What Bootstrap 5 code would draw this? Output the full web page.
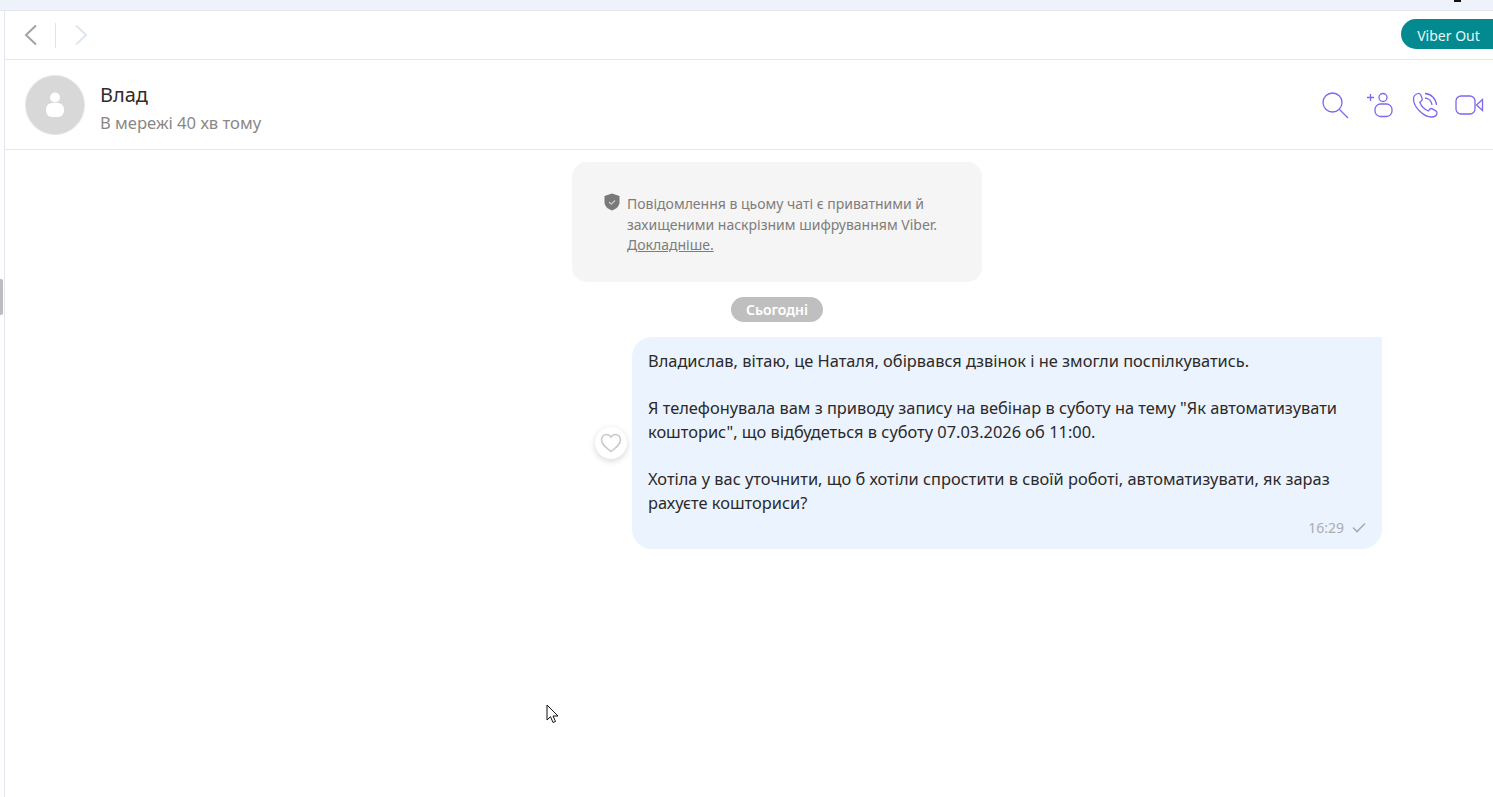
<!DOCTYPE html>
<html lang="uk">
<head>
    <meta charset="UTF-8">
    <meta name="viewport" content="width=device-width, initial-scale=1.0">
    <title>Viber</title>
    <link rel="stylesheet" href="https://cdn.jsdelivr.net/npm/bootstrap@5.3.0/dist/css/bootstrap.min.css">
    <style>
        html, body { height: 100%; overflow: hidden; }
        body { font-family: "Noto Sans", "Open Sans", sans-serif; background: #fff; color: #2f2d2b; }
        .top-strip { height: 11px; background: #eef3fb; border-bottom: 1px solid #e4e6f0; position: relative; }
        .top-mark { position: absolute; left: 1454px; top: 0; width: 7px; height: 2px; background: #111; }
        .app-shell { height: 786px; position: relative; }
        .side-strip { width: 5px; border-right: 1px solid #e4e6f0; background: #fff; flex: none; }
        .side-handle { position: absolute; left: 0; top: 268px; width: 3px; height: 36px; background: #bdbdbd; border-radius: 0 2px 2px 0; }
        .nav-bar { height: 49px; border-bottom: 1px solid #e6e6ee; padding-left: 18px; }
        .nav-sep { width: 1px; height: 25px; background: #e4e4e4; margin: 0 17px 0 16px; }
        .out-btn { background: #028a90; color: #e9f8f8; border: 0; border-radius: 15px 0 0 15px; height: 30px; width: 92px; font-size: 14px; padding: 2px 0 0 3px; margin-top: -2px; }
        .chat-head { height: 90px; border-bottom: 1px solid #e6e6ee; padding: 0 8px 0 20px; }
        .peer-pic { width: 60px; height: 60px; border-radius: 50%; background: #d8d8d8; border: 1px solid #e6e6e6; margin-right: 15px; }
        .peer-info { padding-top: 5px; }
        .peer-name { font-size: 20px; line-height: 27px; color: #2f2d2b; }
        .peer-seen { font-size: 16.6px; line-height: 22px; color: #8b8786; margin-top: 4px; }
        .head-tools { gap: 15px; margin-top: 1px; }
        .chat-body { padding: 12px 0 0 56px; }
        .secure-note { width: 410px; height: 120px; background: #f5f5f5; border-radius: 15px; padding: 32px 30px 0 55px; font-size: 14px; line-height: 20.5px; color: #7f7c7b; }
        .secure-note a { color: #7f7c7b; }
        .shield { position: absolute; left: 32px; top: 31px; }
        .day-pill { width: 92px; height: 25px; border-radius: 13px; background: #bfbfbf; color: #fff; font-size: 14px; font-weight: 600; line-height: 25px; margin-top: 15px; }
        .msg-row { margin: 15px 111px 0 0; }
        .msg-bubble { width: 750px; height: 212px; background: #ebf3fe; border-radius: 20px 0 20px 20px; padding: 12px 16px 0; font-size: 16.4px; line-height: 23.7px; color: #2b2a29; }
        .msg-bubble p { margin: 0 0 23.7px; }
        .msg-meta { font-size: 14px; line-height: 18px; color: #a9adb3; margin-top: 4px; }
        .heart-btn { width: 32px; height: 32px; border-radius: 50%; background: #fff; box-shadow: 0 2px 6px rgba(0,0,0,.16); margin: 0 5px 0 0; }
        .pointer-mark { position: absolute; left: 546px; top: 693px; }
    </style>
</head>
<body>
    <div class="top-strip"><span class="top-mark"></span></div>
    <div class="app-shell d-flex">
        <div class="side-strip"></div>
        <span class="side-handle"></span>
        <div class="flex-grow-1 d-flex flex-column">
            <!-- back / forward + Viber Out -->
            <div class="nav-bar d-flex align-items-center">
                <svg width="16" height="22" viewBox="0 0 16 22" fill="none" stroke="#a3a3a3" stroke-width="2"><path d="M13 1.500 3 11l10 9.500"/></svg>
                <span class="nav-sep"></span>
                <svg width="16" height="22" viewBox="0 0 16 22" fill="none" stroke="#dfe5f3" stroke-width="2"><path d="M3 1.500 13 11 3 20.500"/></svg>
                <button class="out-btn ms-auto">Viber Out</button>
            </div>

            <!-- contact -->
            <div class="chat-head d-flex align-items-center">
                <div class="peer-pic d-flex align-items-center justify-content-center">
                    <svg width="20" height="26" viewBox="0 0 20 26" fill="#fff"><circle cx="10" cy="5.500" r="5"/><rect x="1" y="11" width="18" height="14" rx="6"/></svg>
                </div>
                <div class="peer-info">
                    <div class="peer-name">Влад</div>
                    <div class="peer-seen">В мережі 40 хв тому</div>
                </div>
                <div class="head-tools d-flex align-items-center ms-auto">
                    <svg width="30" height="30" viewBox="0 0 30 30" fill="none" stroke="#7f66f0" stroke-width="1.300"><circle cx="12.500" cy="12.500" r="9.500"/><path d="m19.500 19.500 8.500 8.500"/></svg>
                    <svg width="30" height="30" viewBox="0 0 30 30" fill="none" stroke="#7f66f0" stroke-width="1.300"><path d="M2 7.500h7M5.500 4v7"/><circle cx="18" cy="7.500" r="4"/><rect x="10" y="14" width="17" height="12.500" rx="5.500"/></svg>
                    <svg width="30" height="30" viewBox="0 0 30 30" fill="none" stroke="#7f66f0" stroke-width="1.300"><path d="M8 3.500c-2.500.8-4.500 2.500-4.500 5.500 0 8 10 18 18 18 3 0 5-1.500 5.500-3.500.3-1.200-.2-2-1.200-2.600l-3.300-2c-1.200-.7-2.200-.4-3 .6l-1.200 1.500c-4-1.700-7-5-8.500-8.800l1.500-1.100c1-.8 1.200-1.800.7-3l-1.400-3.300C10 3.700 9.200 3.100 8 3.500Z"/><path d="M15 3.500c6 .3 11 5 11.500 11.500M15 8c3.500.2 6.500 3 7 7"/></svg>
                    <svg width="30" height="30" viewBox="0 0 30 30" fill="none" stroke="#7f66f0" stroke-width="1.300"><rect x="1" y="6" width="19" height="18" rx="5"/><path d="m27.500 9.500-6 5.500 6 5.500Z"/></svg>
                </div>
            </div>

            <!-- messages -->
            <div class="chat-body d-flex flex-column align-items-center">
                <div class="secure-note position-relative">
                    <svg class="shield" width="16" height="18" viewBox="0 0 16 18"><path d="M8 .5 15.500 3v6c0 4-3 7-7.500 8.500C3.500 16 .5 13 .5 9V3Z" fill="#797979"/><path d="m5 9 2.200 2.200L11 7.500" fill="none" stroke="#c9c9c9" stroke-width="1.300"/></svg>
                    Повідомлення в цьому чаті є приватними й захищеними наскрізним шифруванням Viber. <a href="#">Докладніше.</a>
                </div>
                <div class="day-pill text-center">Сьогодні</div>
                <div class="msg-row d-flex align-items-center align-self-end">
                    <div class="heart-btn d-flex align-items-center justify-content-center">
                        <svg width="22" height="20" viewBox="0 0 22 20" fill="none" stroke="#c9c9c9" stroke-width="1.500"><path d="M11 18.500C5 14 1.500 11 1.500 6.800 1.500 3.800 3.800 1.500 6.500 1.500c1.900 0 3.500 1 4.500 2.700 1-1.700 2.600-2.700 4.500-2.700 2.700 0 5 2.300 5 5.300 0 4.200-3.500 7.200-9.500 11.700Z"/></svg>
                    </div>
                    <div class="msg-bubble">
                        <p>Владислав, вітаю, це Наталя, обірвався дзвінок і не змогли поспілкуватись.</p>
                        <p>Я телефонувала вам з приводу запису на вебінар в суботу на тему "Як автоматизувати кошторис", що відбудеться в суботу 07.03.2026 об 11:00.</p>
                        <p class="mb-0">Хотіла у вас уточнити, що б хотіли спростити в своїй роботі, автоматизувати, як зараз рахуєте кошториси?</p>
                        <div class="msg-meta d-flex align-items-center justify-content-end">
                            <span>16:29</span>
                            <svg class="ms-2" width="14" height="11" viewBox="0 0 14 11" fill="none" stroke="#a9adb3" stroke-width="1.600"><path d="m1 5.500 4 4 8-8"/></svg>
                        </div>
                    </div>
                </div>
            </div>
        </div>
        <svg class="pointer-mark" width="13" height="20" viewBox="0 0 13 20"><path d="M1 1v15l3.500-3.300L7 18.500l2.500-1-2.500-5.500h5Z" fill="#fff" stroke="#111" stroke-width="1"/></svg>
    </div>
    <script src="https://cdn.jsdelivr.net/npm/bootstrap@5.3.0/dist/js/bootstrap.bundle.min.js"></script>
</body>
</html>
